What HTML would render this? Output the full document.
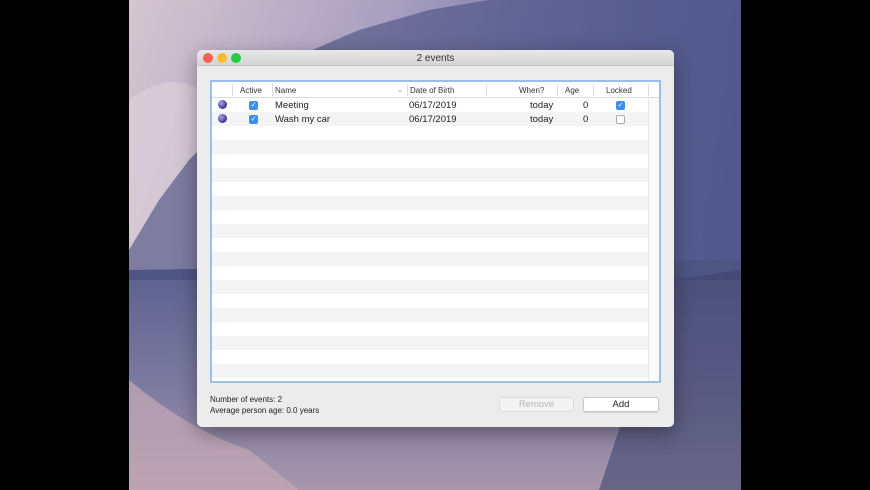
<!DOCTYPE html>
<html><head><meta charset="utf-8"><style>
*{margin:0;padding:0;box-sizing:border-box}
body{width:870px;height:490px;background:#000;position:relative;overflow:hidden;font-family:"Liberation Sans",sans-serif}
#bg{position:absolute;left:129px;top:0;width:612px;height:490px}
.win{position:absolute;left:197px;top:50px;width:477px;height:377px;background:#ececec;border-radius:5px;box-shadow:0 6px 20px rgba(0,0,0,.35);overflow:hidden}
.title{height:16px;background:linear-gradient(#e8e8e8,#d4d4d4);border-bottom:1px solid #c4c4c4;text-align:center;font-size:10px;line-height:17px;color:#333}
.dot{position:absolute;top:3px;width:10px;height:10px;border-radius:50%}
.tbl{position:absolute;left:13px;top:30px;width:451px;height:303px;border:2px solid #9bbfe8;background:#fff;overflow:hidden}
.hdr{position:absolute;left:0;top:0;width:100%;height:16px;border-bottom:1px solid #dcdcdc;background:#fff;font-size:8px;color:#333}
.hdr span{position:absolute;top:4px}
.sep{position:absolute;top:2px;width:1px;height:12px;background:#dcdcdc}
.rows{position:absolute;left:0;top:16px;width:436px;height:290px;background:repeating-linear-gradient(#fff 0 14px,#f4f4f4 14px 28px)}
.sb{position:absolute;left:436px;top:16px;width:13px;height:290px;background:#fafafa;border-left:1px solid #e6e6e6}
.r{position:absolute;left:0;width:436px;height:14px;font-size:9.5px;color:#222}
.r span{position:absolute;top:2px}
.cb{position:absolute;top:3px;width:9px;height:9px;border-radius:2px;background:#3d8ef0;color:#fff;font-size:7px;line-height:9px;text-align:center}
.cbo{background:#fff;border:1px solid #aaa}
.gl{position:absolute;left:6px;top:2px;width:9px;height:9px;border-radius:50%;background:radial-gradient(circle at 35% 35%,#a9a6e8,#4a3f9a 60%,#2a2466)}
.foot{position:absolute;left:13px;font-size:8px;color:#222}
.btn{position:absolute;top:347px;height:15px;border-radius:3px;font-size:9.5px;text-align:center;line-height:14px}
</style></head><body>
<svg id="bg" viewBox="0 0 612 490">
<defs>
<linearGradient id="sky" x1="0" y1="0" x2="1" y2="0.3"><stop offset="0" stop-color="#d6c6d0"/><stop offset=".4" stop-color="#a8a0c0"/><stop offset=".7" stop-color="#6c70a6"/><stop offset="1" stop-color="#5a609a"/></linearGradient>
<linearGradient id="lake" x1="0" y1="0" x2="0" y2="1"><stop offset="0" stop-color="#5e6390"/><stop offset=".5" stop-color="#7d7aa0"/><stop offset="1" stop-color="#a896ab"/></linearGradient>
<linearGradient id="mt" x1="0" y1="0" x2="1" y2="0"><stop offset="0" stop-color="#6a6a92"/><stop offset="1" stop-color="#50568a"/></linearGradient>
</defs>
<rect width="612" height="490" fill="url(#sky)"/>
<path d="M0 100 Q40 70 70 90 L70 280 L0 280Z" fill="#e0d2da" opacity=".6"/>
<path d="M0 250 L30 200 L60 160 L90 130 L120 100 L160 60 L230 30 L300 10 L360 0 L612 0 L612 280 L0 280Z" fill="url(#mt)" opacity=".8"/>
<path d="M0 270 L612 260 L612 290 L0 290Z" fill="#4f5583"/>
<rect y="280" width="612" height="210" fill="url(#lake)"/>
<path d="M0 380 Q60 430 120 450 L170 490 L0 490Z" fill="#c4aab8" opacity=".7"/>
<path d="M540 280 L612 270 L612 490 L470 490Z" fill="#40446e" opacity=".6"/>
</svg>
<div class="win">
<div class="title">2 events</div>
<div class="dot" style="left:6px;background:#fc5f57"></div>
<div class="dot" style="left:20px;background:#fdbc2e"></div>
<div class="dot" style="left:34px;background:#28c840"></div>
<div class="tbl">
<div class="hdr">
<div class="sep" style="left:20px"></div>
<span style="left:28px">Active</span>
<div class="sep" style="left:60px"></div>
<span style="left:63px">Name</span><span style="left:185px;font-size:7px;color:#888">⌄</span>
<div class="sep" style="left:195px"></div>
<span style="left:198px">Date of Birth</span>
<div class="sep" style="left:274px"></div>
<span style="left:307px">When?</span>
<div class="sep" style="left:345px"></div>
<span style="left:353px">Age</span>
<div class="sep" style="left:381px"></div>
<span style="left:394px">Locked</span>
<div class="sep" style="left:436px"></div>
</div>
<div class="rows"></div>
<div class="sb"></div>
<div class="r" style="top:16px"><div class="gl"></div><div class="cb" style="left:37px">✓</div><span style="left:63px">Meeting</span><span style="left:197px">06/17/2019</span><span style="left:318px">today</span><span style="left:371px">0</span><div class="cb" style="left:404px">✓</div></div>
<div class="r" style="top:30px"><div class="gl"></div><div class="cb" style="left:37px">✓</div><span style="left:63px">Wash my car</span><span style="left:197px">06/17/2019</span><span style="left:318px">today</span><span style="left:371px">0</span><div class="cb cbo" style="left:404px"></div></div>
</div>
<div class="foot" style="top:345px">Number of events: 2</div>
<div class="foot" style="top:356px">Average person age: 0.0 years</div>
<div class="btn" style="left:302px;width:75px;background:#f3f3f3;border:1px solid #dcdcdc;color:#b5b5b5">Remove</div>
<div class="btn" style="left:386px;width:76px;background:#fff;border:1px solid #c8c8c8;color:#222;box-shadow:0 1px 1px rgba(0,0,0,.1)">Add</div>
</div>
</body></html>
